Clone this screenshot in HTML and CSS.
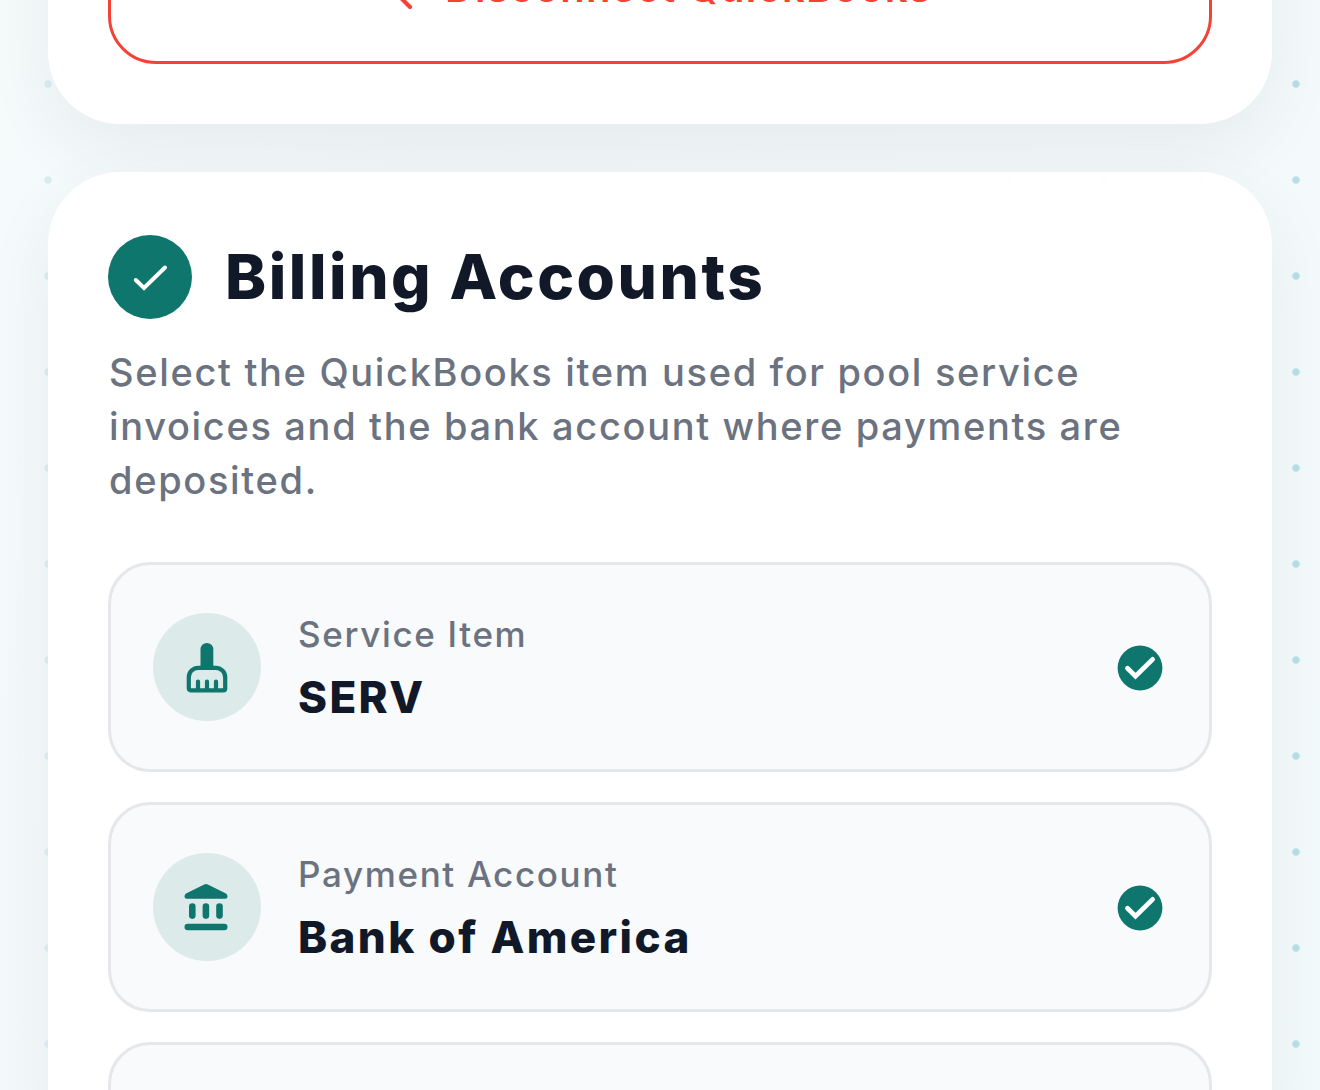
FILE: index.html
```
<!DOCTYPE html>
<html lang="en">
<head>
<meta charset="utf-8">
<title>Billing Accounts</title>
<link rel="stylesheet" href="styles.css">
</head>
<body>
<main class="screen">
  <section class="panel connection">
    <button class="disconnect">
      <svg class="link-off" viewBox="0 0 48 48" fill="none" stroke="currentColor" stroke-width="4.2" stroke-linecap="round"><path d="M5 11 37 43M20 15h-7a9 9 0 0 0 0 18h7M28 15h7a9 9 0 0 1 5 16"/></svg>
      <span>Disconnect QuickBooks</span>
    </button>
  </section>
  <section class="panel billing">
    <header class="heading">
      <span class="badge"><svg width="48" height="48" viewBox="0 0 48 48" fill="none" stroke="currentColor" stroke-width="4" stroke-linecap="round"><path d="M9.8 27 18 35 39 14.5"/></svg></span>
      <h1>Billing Accounts</h1>
    </header>
    <p class="intro">Select the QuickBooks item used for pool service invoices and the bank account where payments are deposited.</p>
    <div class="accounts">
      <article class="account">
        <span class="symbol"><svg width="54" height="54" viewBox="0 0 54 54"><path fill="currentColor" d="M20.5 27V9.3a6.4 6.4 0 0 1 12.8 0V27z"/><path fill="none" stroke="currentColor" stroke-width="4.2" stroke-linecap="round" d="M18.3 27.8h17.4a9.5 9.5 0 0 1 9.5 9.5v11.2q0 1.8-1.8 1.8H10.6q-1.8 0-1.8-1.8V37.3a9.5 9.5 0 0 1 9.5-9.5zM18 41.6V50M27 41.6V50M36 41.6V50"/></svg></span>
        <div class="details"><span class="label">Service Item</span><strong class="value">SERV</strong></div>
        <svg class="selected" width="54" height="54" viewBox="0 0 54 54"><circle cx="27" cy="27" r="22.4" fill="#0f766e"/><path d="M14.5 27.3 22.5 35.2 39.6 18.4" fill="none" stroke="#fff" stroke-width="4.8" stroke-linecap="round"/></svg>
      </article>
      <article class="account">
        <span class="symbol"><svg width="54" height="54" viewBox="0 0 54 54" fill="currentColor"><path d="M24.2 4.4q1.8-1 3.6 0L45.5 13.3q2 1 2 2.9 0 2.5-2.6 2.5H7.1q-2.6 0-2.6-2.5 0-1.9 2-2.9z"/><rect x="9" y="23.3" width="6.6" height="15.6" rx="3.3"/><rect x="22.6" y="23.3" width="6.6" height="15.6" rx="3.3"/><rect x="36.2" y="23.3" width="6.6" height="15.6" rx="3.3"/><rect x="4.5" y="43.7" width="43" height="6.6" rx="3.3"/></svg></span>
        <div class="details"><span class="label">Payment Account</span><strong class="value">Bank of America</strong></div>
        <svg class="selected" width="54" height="54" viewBox="0 0 54 54"><circle cx="27" cy="27" r="22.4" fill="#0f766e"/><path d="M14.5 27.3 22.5 35.2 39.6 18.4" fill="none" stroke="#fff" stroke-width="4.8" stroke-linecap="round"/></svg>
      </article>
      <article class="account"></article>
    </div>
  </section>
</main>
</body>
</html>
```
FILE: styles.css
```
* { box-sizing: border-box; }
body { margin: 0; font-family: Inter, "Liberation Sans", sans-serif; color: #111827; }
.screen {
  position: relative;
  isolation: isolate;
  height: 1090px;
  overflow: hidden;
  padding: 0 48px;
  display: flow-root;
  background: linear-gradient(100deg, #f5fbfb, #f3f9fb 30%, #f3fafb);
}
/* dotted backdrop, fading toward the lower left */
.screen::before {
  content: "";
  position: absolute;
  inset: 0;
  z-index: -1;
  background: radial-gradient(circle at center, #bbdee6 3.3px, transparent 4.2px) 0 36px / 96px 96px;
  -webkit-mask-image: linear-gradient(75deg, rgba(0,0,0,.3), #000 85%);
  mask-image: linear-gradient(75deg, rgba(0,0,0,.3), #000 85%);
}
.panel {
  border-radius: 72px;
  padding: 60px;
  background: rgba(255,255,255,.97);
  box-shadow: 0 24px 72px rgba(0,0,0,.06);
}
.connection {
  height: 300px;
  margin-top: -175.6px;
  display: flex;
  align-items: flex-end;
}
.disconnect {
  width: 100%;
  height: 153px;
  padding: 0 15px 0 0;
  border: 3px solid #f44336;
  border-radius: 48px;
  background: transparent;
  color: #f44336;
  font: 600 40px/48px Inter, sans-serif;
  letter-spacing: 1.25px;
  display: flex;
  align-items: center;
  justify-content: center;
  gap: 24px;
}
.link-off { width: 48px; height: 48px; }
.billing { margin-top: 48px; padding-top: 63px; height: 1000px; }
.heading { display: flex; align-items: center; gap: 33px; height: 84px; }
.badge {
  width: 84px; height: 84px;
  border-radius: 50%;
  background: #0f766e;
  color: #fff;
  display: grid;
  place-items: center;
}
h1 { margin: 0; font-size: 62px; line-height: 84px; font-weight: 800; letter-spacing: 2.55px; }
.intro { margin: 26px 0 0; padding-left: 1px; font-size: 38px; line-height: 54px; font-weight: 550; letter-spacing: 1.67px; color: #6b7280; }
.accounts { margin-top: 55px; display: grid; gap: 30px; }
.account {
  height: 210px;
  padding: 0 42px;
  border: 3px solid #e5e7eb;
  border-radius: 42px;
  background: #f9fafc;
  display: flex;
  align-items: center;
  gap: 37px;
}
.symbol {
  width: 108px; height: 108px;
  border-radius: 50%;
  background: #dceae9;
  color: #0f766e;
  display: grid;
  place-items: center;
}
.details { flex: 1; display: flex; flex-direction: column; gap: 6px; }
.label { font-size: 35px; line-height: 54px; font-weight: 550; letter-spacing: 1.65px; color: #6b7280; }
.value { font-size: 44px; line-height: 60px; font-weight: 800; letter-spacing: 2.35px; }
.selected { margin-top: 1px; }
```
